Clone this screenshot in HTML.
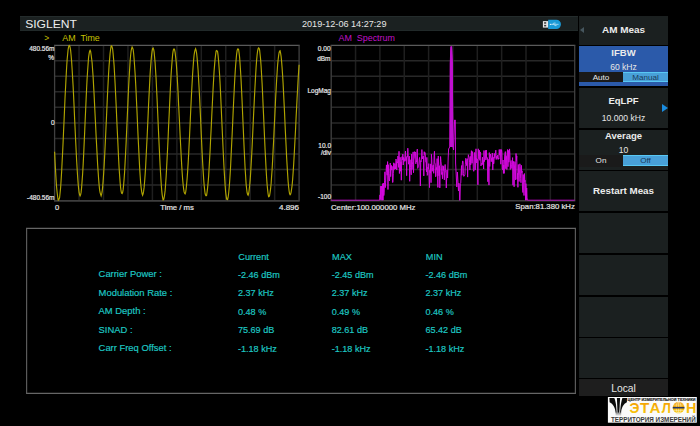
<!DOCTYPE html>
<html><head><meta charset="utf-8">
<style>
html,body{margin:0;padding:0;background:#000;width:700px;height:426px;overflow:hidden}
body{position:relative;font-family:"Liberation Sans",sans-serif}
.a{position:absolute;white-space:nowrap;line-height:1}
.topbar{position:absolute;left:19.5px;top:16px;width:558.5px;height:15px;background:#1b2121;box-shadow:inset 0 0.7px 0 #283030, inset 0 -0.7px 0 #252c2c}
.rp{position:absolute;left:579px;width:89px;background:#1b2020}
.w{color:#e6e6e6}
.lbl{color:#e6e6e6;font-size:6.5px;-webkit-text-stroke:0.2px #e6e6e6}
.cy{color:#22c8d4;font-size:9.4px}
.bt{color:#ececec;font-weight:bold;font-size:9.5px;text-align:center;width:89px}
.vt{color:#e6e6e6;font-size:8.6px;text-align:center;width:89px}
</style></head><body>
<div class="topbar"></div>
<svg width="100" height="40" style="position:absolute;left:0;top:0"><text x="25.2" y="28.1" font-family="Liberation Sans" font-size="10.8" fill="#ececec" stroke="none" textLength="51.8" lengthAdjust="spacingAndGlyphs">SIGLENT</text></svg>
<div class="a w" style="left:302px;top:20px;font-size:9.1px">2019-12-06 14:27:29</div>
<!-- usb icon -->
<svg width="24" height="14" style="position:absolute;left:540px;top:18px">
<rect x="2.9" y="3.1" width="5.4" height="6.5" fill="#e6e6e6"/>
<rect x="4.1" y="4.2" width="2.1" height="1.5" fill="#3a3a3a"/>
<rect x="4.1" y="6.9" width="2.1" height="1.5" fill="#3a3a3a"/>
<path d="M8.2,1.7 H16.3 A4.65,4.65 0 0 1 16.3,11 H8.2 Z" fill="#1a9ad8"/>
<g stroke="#e8f6ff" stroke-width="0.6" fill="none">
<line x1="10.4" y1="6.35" x2="18.6" y2="6.35"/>
<polyline points="12.6,6.35 13.6,5.1 15.6,5.1"/>
<polyline points="13.8,6.35 14.8,7.6 16.6,7.6"/>
</g>
<circle cx="10.4" cy="6.35" r="0.7" fill="#e8f6ff"/>
</svg>

<svg width="700" height="426" style="position:absolute;left:0;top:0">
<line x1="79.05" y1="45.20" x2="79.05" y2="200.60" stroke="#1f1f1f" stroke-width="1.5"/>
<line x1="54.60" y1="60.74" x2="299.10" y2="60.74" stroke="#282828" stroke-width="1.5"/>
<line x1="103.50" y1="45.20" x2="103.50" y2="200.60" stroke="#1f1f1f" stroke-width="1.5"/>
<line x1="54.60" y1="76.28" x2="299.10" y2="76.28" stroke="#282828" stroke-width="1.5"/>
<line x1="127.95" y1="45.20" x2="127.95" y2="200.60" stroke="#1f1f1f" stroke-width="1.5"/>
<line x1="54.60" y1="91.82" x2="299.10" y2="91.82" stroke="#282828" stroke-width="1.5"/>
<line x1="152.40" y1="45.20" x2="152.40" y2="200.60" stroke="#1f1f1f" stroke-width="1.5"/>
<line x1="54.60" y1="107.36" x2="299.10" y2="107.36" stroke="#282828" stroke-width="1.5"/>
<line x1="176.85" y1="45.20" x2="176.85" y2="200.60" stroke="#1f1f1f" stroke-width="1.5"/>
<line x1="54.60" y1="122.90" x2="299.10" y2="122.90" stroke="#282828" stroke-width="1.5"/>
<line x1="201.30" y1="45.20" x2="201.30" y2="200.60" stroke="#1f1f1f" stroke-width="1.5"/>
<line x1="54.60" y1="138.44" x2="299.10" y2="138.44" stroke="#282828" stroke-width="1.5"/>
<line x1="225.75" y1="45.20" x2="225.75" y2="200.60" stroke="#1f1f1f" stroke-width="1.5"/>
<line x1="54.60" y1="153.98" x2="299.10" y2="153.98" stroke="#282828" stroke-width="1.5"/>
<line x1="250.20" y1="45.20" x2="250.20" y2="200.60" stroke="#1f1f1f" stroke-width="1.5"/>
<line x1="54.60" y1="169.52" x2="299.10" y2="169.52" stroke="#282828" stroke-width="1.5"/>
<line x1="274.65" y1="45.20" x2="274.65" y2="200.60" stroke="#1f1f1f" stroke-width="1.5"/>
<line x1="54.60" y1="185.06" x2="299.10" y2="185.06" stroke="#282828" stroke-width="1.5"/>
<line x1="54.00" y1="45.45" x2="299.70" y2="45.45" stroke="#5a5a5a" stroke-width="1.3"/>
<line x1="54.00" y1="200.90" x2="299.70" y2="200.90" stroke="#3e3e3e" stroke-width="1.6"/>
<line x1="54.60" y1="45.45" x2="54.60" y2="200.90" stroke="#404040" stroke-width="1.3"/>
<line x1="299.10" y1="45.45" x2="299.10" y2="200.90" stroke="#404040" stroke-width="1.3"/>
<line x1="355.55" y1="45.20" x2="355.55" y2="200.60" stroke="#1f1f1f" stroke-width="1.5"/>
<line x1="331.20" y1="60.74" x2="574.70" y2="60.74" stroke="#282828" stroke-width="1.5"/>
<line x1="379.90" y1="45.20" x2="379.90" y2="200.60" stroke="#1f1f1f" stroke-width="1.5"/>
<line x1="331.20" y1="76.28" x2="574.70" y2="76.28" stroke="#282828" stroke-width="1.5"/>
<line x1="404.25" y1="45.20" x2="404.25" y2="200.60" stroke="#1f1f1f" stroke-width="1.5"/>
<line x1="331.20" y1="91.82" x2="574.70" y2="91.82" stroke="#282828" stroke-width="1.5"/>
<line x1="428.60" y1="45.20" x2="428.60" y2="200.60" stroke="#1f1f1f" stroke-width="1.5"/>
<line x1="331.20" y1="107.36" x2="574.70" y2="107.36" stroke="#282828" stroke-width="1.5"/>
<line x1="452.95" y1="45.20" x2="452.95" y2="200.60" stroke="#1f1f1f" stroke-width="1.5"/>
<line x1="331.20" y1="122.90" x2="574.70" y2="122.90" stroke="#282828" stroke-width="1.5"/>
<line x1="477.30" y1="45.20" x2="477.30" y2="200.60" stroke="#1f1f1f" stroke-width="1.5"/>
<line x1="331.20" y1="138.44" x2="574.70" y2="138.44" stroke="#282828" stroke-width="1.5"/>
<line x1="501.65" y1="45.20" x2="501.65" y2="200.60" stroke="#1f1f1f" stroke-width="1.5"/>
<line x1="331.20" y1="153.98" x2="574.70" y2="153.98" stroke="#282828" stroke-width="1.5"/>
<line x1="526.00" y1="45.20" x2="526.00" y2="200.60" stroke="#1f1f1f" stroke-width="1.5"/>
<line x1="331.20" y1="169.52" x2="574.70" y2="169.52" stroke="#282828" stroke-width="1.5"/>
<line x1="550.35" y1="45.20" x2="550.35" y2="200.60" stroke="#1f1f1f" stroke-width="1.5"/>
<line x1="331.20" y1="185.06" x2="574.70" y2="185.06" stroke="#282828" stroke-width="1.5"/>
<line x1="330.60" y1="45.45" x2="575.30" y2="45.45" stroke="#5a5a5a" stroke-width="1.3"/>
<line x1="330.60" y1="200.80" x2="575.30" y2="200.80" stroke="#3e3e3e" stroke-width="1.6"/>
<line x1="331.20" y1="45.45" x2="331.20" y2="200.80" stroke="#404040" stroke-width="1.3"/>
<line x1="574.70" y1="45.45" x2="574.70" y2="200.80" stroke="#404040" stroke-width="1.3"/>
<polyline fill="none" stroke="#b0a400" stroke-width="1.15" stroke-linejoin="miter" points="54.6,151.7 55.1,162.3 55.6,171.5 56.1,180.1 56.6,187.2 57.1,192.2 57.6,196.3 58.1,199.9 58.6,200.0 59.1,199.1 59.6,197.6 60.1,192.8 60.6,187.7 61.1,180.3 61.6,172.2 62.1,162.3 62.6,152.8 63.1,142.2 63.6,130.6 64.1,119.5 64.6,108.1 65.1,96.3 65.6,86.7 66.1,76.9 66.6,67.8 67.1,60.0 67.6,54.8 68.1,49.6 68.6,46.8 69.1,45.5 69.6,45.4 70.1,47.4 70.6,50.1 71.1,55.3 71.6,61.1 72.1,69.0 72.6,77.4 73.1,85.9 73.6,96.0 74.1,106.7 74.6,118.5 75.1,128.8 75.6,139.8 76.1,149.7 76.6,159.7 77.1,168.4 77.6,176.2 78.1,183.1 78.6,188.5 79.1,192.7 79.6,194.8 80.1,195.9 80.6,194.9 81.1,192.4 81.6,187.6 82.1,180.9 82.6,174.2 83.1,165.6 83.6,155.6 84.1,144.6 84.6,133.6 85.1,121.5 85.6,110.8 86.1,99.4 86.6,88.5 87.1,78.6 87.6,71.0 88.1,64.0 88.6,57.1 89.1,53.9 89.6,51.1 90.1,50.2 90.6,51.4 91.1,54.5 91.6,58.5 92.1,62.7 92.6,69.8 93.1,76.6 93.6,85.9 94.1,94.6 94.6,105.1 95.1,115.3 95.6,125.1 96.1,135.9 96.6,145.1 97.1,154.4 97.6,164.0 98.1,171.4 98.6,178.7 99.1,184.9 99.6,189.8 100.1,192.6 100.6,194.4 101.1,195.8 101.6,194.0 102.1,192.0 102.6,187.6 103.1,181.2 103.6,174.3 104.1,166.1 104.6,156.9 105.1,146.8 105.6,136.2 106.1,125.3 106.6,114.6 107.1,103.2 107.6,92.5 108.1,83.0 108.6,73.3 109.1,65.3 109.6,59.3 110.1,53.3 110.6,49.3 111.1,46.2 111.6,45.9 112.1,46.9 112.6,48.8 113.1,53.6 113.6,59.3 114.1,65.6 114.6,74.5 115.1,83.6 115.6,94.0 116.1,104.3 116.6,115.8 117.1,127.0 117.6,137.1 118.1,147.8 118.6,158.5 119.1,167.9 119.6,175.1 120.1,182.1 120.6,187.6 121.1,191.1 121.6,193.3 122.1,193.7 122.6,192.6 123.1,189.9 123.6,185.0 124.1,179.0 124.6,172.0 125.1,162.4 125.6,153.3 126.1,143.1 126.6,131.5 127.1,120.2 127.6,109.6 128.1,97.9 128.6,87.4 129.1,78.0 129.6,69.6 130.1,61.4 130.6,55.5 131.1,51.0 131.6,48.7 132.1,47.0 132.6,48.0 133.1,49.3 133.6,53.3 134.1,59.0 134.6,66.1 135.1,73.5 135.6,82.4 136.1,92.2 136.6,103.3 137.1,113.9 137.6,125.8 138.1,136.9 138.6,146.8 139.1,157.0 139.6,166.9 140.1,175.0 140.6,182.2 141.1,187.3 141.6,191.1 142.1,193.8 142.6,195.3 143.1,193.8 143.6,191.4 144.1,187.4 144.6,181.8 145.1,174.9 145.6,167.3 146.1,157.2 146.6,147.0 147.1,137.5 147.6,126.5 148.1,115.6 148.6,104.0 149.1,94.1 149.6,84.2 150.1,74.3 150.6,67.0 151.1,60.4 151.6,55.0 152.1,51.0 152.6,48.6 153.1,48.1 153.6,49.2 154.1,51.9 154.6,57.1 155.1,62.8 155.6,70.9 156.1,78.6 156.6,89.3 157.1,99.6 157.6,110.9 158.1,122.2 158.6,133.7 159.1,144.5 159.6,154.6 160.1,165.5 160.6,173.9 161.1,182.0 161.6,189.1 162.1,194.1 162.6,197.5 163.1,200.0 163.6,199.8 164.1,198.0 164.6,194.8 165.1,190.9 165.6,184.3 166.1,177.2 166.6,168.1 167.1,158.4 167.6,148.5 168.1,138.0 168.6,126.1 169.1,115.7 169.6,104.9 170.1,94.2 170.6,84.4 171.1,74.4 171.6,67.3 172.1,60.9 172.6,54.7 173.1,51.2 173.6,49.1 174.1,48.9 174.6,49.8 175.1,52.4 175.6,56.7 176.1,61.1 176.6,67.7 177.1,75.5 177.6,84.0 178.1,93.3 178.6,104.4 179.1,114.5 179.6,124.0 180.1,134.9 180.6,144.8 181.1,154.4 181.6,163.4 182.1,171.8 182.6,178.7 183.1,184.3 183.6,188.6 184.1,191.9 184.6,193.3 185.1,193.9 185.6,192.7 186.1,189.3 186.6,184.5 187.1,178.8 187.6,171.9 188.1,163.9 188.6,155.0 189.1,144.6 189.6,134.8 190.1,123.9 190.6,113.0 191.1,102.4 191.6,92.4 192.1,83.2 192.6,74.2 193.1,67.0 193.6,60.3 194.1,55.0 194.6,51.8 195.1,49.9 195.6,48.7 196.1,50.3 196.6,53.1 197.1,57.9 197.6,63.8 198.1,70.2 198.6,79.1 199.1,88.2 199.6,97.6 200.1,108.5 200.6,119.0 201.1,130.8 201.6,141.4 202.1,152.1 202.6,161.7 203.1,170.4 203.6,178.3 204.1,184.7 204.6,189.4 205.1,193.7 205.6,195.1 206.1,195.7 206.6,195.4 207.1,191.9 207.6,187.9 208.1,182.5 208.6,176.7 209.1,168.1 209.6,159.1 210.1,150.5 210.6,139.5 211.1,129.9 211.6,119.1 212.1,108.8 212.6,98.7 213.1,88.6 213.6,79.9 214.1,70.9 214.6,64.9 215.1,58.9 215.6,54.8 216.1,51.1 216.6,50.5 217.1,50.9 217.6,51.7 218.1,55.6 218.6,61.0 219.1,67.8 219.6,75.0 220.1,83.9 220.6,93.9 221.1,105.0 221.6,116.2 222.1,127.1 222.6,138.3 223.1,149.2 223.6,159.6 224.1,169.2 224.6,177.4 225.1,185.2 225.6,191.8 226.1,195.6 226.6,198.9 227.1,199.4 227.6,199.5 228.1,197.5 228.6,193.8 229.1,188.5 229.6,182.1 230.1,174.6 230.6,166.2 231.1,155.6 231.6,145.3 232.1,135.3 232.6,124.5 233.1,113.1 233.6,102.3 234.1,92.3 234.6,82.0 235.1,73.4 235.6,65.7 236.1,59.7 236.6,54.3 237.1,50.6 237.6,49.0 238.1,48.9 238.6,49.4 239.1,53.0 239.6,57.4 240.1,64.4 240.6,72.0 241.1,80.7 241.6,90.8 242.1,101.5 242.6,113.5 243.1,124.9 243.6,136.2 244.1,147.6 244.6,158.0 245.1,168.1 245.6,175.8 246.1,183.9 246.6,188.7 247.1,192.7 247.6,194.5 248.1,195.2 248.6,193.8 249.1,190.5 249.6,186.0 250.1,180.6 250.6,173.7 251.1,165.1 251.6,156.4 252.1,146.9 252.6,136.0 253.1,125.1 253.6,114.4 254.1,104.4 254.6,94.1 255.1,84.8 255.6,75.8 256.1,67.2 256.6,60.4 257.1,55.0 257.6,50.8 258.1,48.8 258.6,47.9 259.1,48.4 259.6,49.9 260.1,54.5 260.6,59.4 261.1,66.4 261.6,75.0 262.1,83.6 262.6,93.8 263.1,105.5 263.6,116.1 264.1,127.6 264.6,139.1 265.1,150.0 265.6,159.4 266.1,169.2 266.6,177.5 267.1,184.5 267.6,189.6 268.1,194.0 268.6,196.7 269.1,196.5 269.6,195.6 270.1,192.5 270.6,188.7 271.1,183.7 271.6,176.4 272.1,169.5 272.6,160.8 273.1,150.3 273.6,141.2 274.1,130.0 274.6,119.9 275.1,109.4 275.6,98.7 276.1,89.5 276.6,80.5 277.1,72.7 277.6,65.1 278.1,60.0 278.6,55.9 279.1,52.7 279.6,51.2 280.1,50.8 280.6,53.1 281.1,56.3 281.6,61.6 282.1,67.9 282.6,75.3 283.1,83.5 283.6,93.6 284.1,103.8 284.6,113.9 285.1,125.6 285.6,136.1 286.1,146.0 286.6,156.9 287.1,165.2 287.6,173.6 288.1,181.2 288.6,186.8 289.1,191.0 289.6,193.9 290.1,194.8 290.6,194.2 291.1,192.3 291.6,189.0 292.1,185.4 292.6,179.9 293.1,172.9 293.6,165.5 294.1,156.6 294.6,147.3 295.1,137.8 295.6,128.5 296.1,117.4 296.6,107.9 297.1,97.8 297.6,89.1 298.1,79.8 298.6,71.8 299.1,64.8"/>
<polyline fill="none" stroke="#d808e2" stroke-width="0.95" stroke-linejoin="bevel" points="331.20,200.2 331.58,200.2 331.96,200.2 332.34,200.2 332.72,200.2 333.11,200.2 333.49,200.2 333.87,200.2 334.25,200.2 334.63,200.2 335.01,200.2 335.39,200.2 335.77,200.2 336.15,200.2 336.53,200.2 336.92,200.2 337.30,200.2 337.68,200.2 338.06,200.2 338.44,200.2 338.82,200.2 339.20,200.2 339.58,200.2 339.96,200.2 340.35,200.2 340.73,200.2 341.11,200.2 341.49,200.2 341.87,200.2 342.25,200.2 342.63,200.2 343.01,200.2 343.39,200.2 343.78,200.2 344.16,200.2 344.54,200.2 344.92,200.2 345.30,200.2 345.68,200.2 346.06,200.2 346.44,200.2 346.82,200.2 347.20,200.2 347.59,200.2 347.97,200.2 348.35,200.2 348.73,200.2 349.11,200.2 349.49,200.2 349.87,200.2 350.25,200.2 350.63,200.2 351.02,200.2 351.40,200.2 351.78,200.2 352.16,200.2 352.54,200.2 352.92,200.2 353.30,200.2 353.68,200.2 354.06,200.2 354.44,200.2 354.83,200.2 355.21,200.2 355.59,200.2 355.97,200.2 356.35,200.2 356.73,200.2 357.11,200.2 357.49,200.2 357.87,200.2 358.26,200.2 358.64,200.2 359.02,200.2 359.40,200.2 359.78,200.2 360.16,200.2 360.54,200.2 360.92,200.2 361.30,200.2 361.69,200.2 362.07,200.2 362.45,200.2 362.83,200.2 363.21,200.2 363.59,200.2 363.97,200.2 364.35,200.2 364.73,200.2 365.11,200.2 365.50,200.2 365.88,200.2 366.26,200.2 366.64,200.2 367.02,200.2 367.40,200.2 367.78,200.2 368.16,200.2 368.54,200.2 368.93,200.2 369.31,200.2 369.69,200.2 370.07,200.2 370.45,200.2 370.83,200.2 371.21,200.2 371.59,200.2 371.97,200.2 372.35,200.2 372.74,200.2 373.12,200.2 373.50,200.2 373.88,200.2 374.26,200.2 374.64,200.2 375.02,200.2 375.40,200.2 375.78,200.2 376.17,200.2 376.55,200.2 376.93,200.2 377.31,200.2 377.69,200.2 378.07,200.2 378.45,200.2 378.83,200.2 379.21,200.2 379.60,200.2 379.98,194.9 380.36,199.4 380.74,186.1 381.12,200.2 381.50,186.1 381.88,188.5 382.26,200.2 382.64,183.7 383.02,200.2 383.41,183.2 383.79,195.6 384.17,192.8 384.55,180.3 384.93,171.8 385.31,187.6 385.69,182.4 386.07,172.6 386.45,164.9 386.84,172.3 387.22,175.2 387.60,161.6 387.98,189.5 388.36,164.7 388.74,175.5 389.12,180.0 389.50,180.9 389.88,173.3 390.26,163.0 390.65,176.6 391.03,166.7 391.41,165.4 391.79,170.1 392.17,166.4 392.55,182.4 392.93,182.4 393.31,173.5 393.69,162.8 394.08,167.1 394.46,169.4 394.84,163.6 395.22,165.8 395.60,169.0 395.98,159.0 396.36,160.6 396.74,169.9 397.12,162.4 397.51,163.0 397.89,156.1 398.27,158.9 398.65,167.4 399.03,151.3 399.41,173.5 399.79,163.7 400.17,157.3 400.55,171.2 400.93,161.9 401.32,180.2 401.70,158.5 402.08,156.6 402.46,159.9 402.84,154.0 403.22,165.0 403.60,157.4 403.98,159.1 404.36,159.2 404.75,161.4 405.13,154.1 405.51,151.0 405.89,160.7 406.27,157.2 406.65,175.7 407.03,156.3 407.41,157.1 407.79,148.2 408.17,153.6 408.56,164.2 408.94,161.6 409.32,156.2 409.70,181.3 410.08,159.7 410.46,167.6 410.84,170.2 411.22,174.8 411.60,154.1 411.99,169.5 412.37,164.8 412.75,161.2 413.13,151.9 413.51,172.7 413.89,160.0 414.27,158.1 414.65,151.6 415.03,153.1 415.42,152.1 415.80,163.9 416.18,160.7 416.56,161.9 416.94,151.6 417.32,149.1 417.70,168.4 418.08,167.3 418.46,165.3 418.84,165.2 419.23,159.3 419.61,157.4 419.99,164.3 420.37,186.0 420.75,160.7 421.13,161.8 421.51,158.0 421.89,149.6 422.27,155.8 422.66,159.0 423.04,157.2 423.42,156.2 423.80,175.9 424.18,151.7 424.56,154.5 424.94,152.5 425.32,154.2 425.70,161.9 426.08,161.8 426.47,171.8 426.85,157.4 427.23,175.4 427.61,174.9 427.99,167.1 428.37,169.0 428.75,163.6 429.13,177.1 429.51,187.6 429.90,170.2 430.28,173.1 430.66,163.9 431.04,182.7 431.42,154.3 431.80,159.5 432.18,171.3 432.56,167.6 432.94,165.3 433.33,165.0 433.71,173.3 434.09,156.1 434.47,151.3 434.85,163.6 435.23,163.5 435.61,176.8 435.99,175.9 436.37,167.4 436.75,169.7 437.14,158.6 437.52,173.9 437.90,187.4 438.28,156.0 438.66,165.4 439.04,175.8 439.42,165.7 439.80,187.9 440.18,166.7 440.57,156.5 440.95,161.3 441.33,165.1 441.71,174.5 442.09,172.3 442.47,178.8 442.85,165.6 443.23,170.4 443.61,166.4 443.99,175.6 444.38,179.9 444.76,168.9 445.14,164.5 445.52,170.7 445.90,173.0 446.30,188.0 447.00,170.0 447.60,178.0 448.20,158.0 448.60,149.0 449.70,147.0 450.30,63.0 450.80,46.5 451.60,46.5 452.20,63.0 453.00,147.0 453.60,150.0 454.60,120.0 455.30,120.0 455.60,163.0 456.20,175.0 456.80,187.0 457.40,172.0 458.00,182.0 458.48,191.0 458.86,183.1 459.24,185.2 459.62,200.2 460.00,200.2 460.38,183.7 460.76,183.2 461.14,173.1 461.52,165.6 461.91,175.3 462.29,164.3 462.67,160.9 463.05,161.8 463.43,173.4 463.81,176.4 464.19,175.3 464.57,175.5 464.95,174.3 465.33,164.3 465.72,158.3 466.10,159.3 466.48,165.5 466.86,161.9 467.24,158.7 467.62,177.1 468.00,160.3 468.38,154.7 468.76,157.1 469.15,157.4 469.53,162.3 469.91,169.9 470.29,156.4 470.67,165.0 471.05,155.9 471.43,150.7 471.81,163.3 472.19,163.1 472.57,151.6 472.96,156.9 473.34,169.4 473.72,171.3 474.10,170.0 474.48,152.5 474.86,154.8 475.24,169.9 475.62,154.1 476.00,148.8 476.39,157.1 476.77,163.0 477.15,158.9 477.53,170.1 477.91,184.8 478.29,148.8 478.67,156.7 479.05,158.8 479.43,150.3 479.82,160.3 480.20,151.9 480.58,152.9 480.96,165.9 481.34,164.5 481.72,163.3 482.10,164.8 482.48,157.2 482.86,164.2 483.24,160.3 483.63,169.0 484.01,150.5 484.39,161.6 484.77,159.3 485.15,157.0 485.53,150.5 485.91,160.0 486.29,150.0 486.67,158.3 487.06,157.7 487.44,157.8 487.82,181.7 488.20,159.3 488.58,166.2 488.96,185.1 489.34,152.6 489.72,166.5 490.10,158.5 490.48,154.0 490.87,157.0 491.25,161.7 491.63,157.8 492.01,157.1 492.39,153.0 492.77,170.0 493.15,157.1 493.53,164.0 493.91,163.2 494.30,153.4 494.68,158.2 495.06,157.2 495.44,153.7 495.82,150.2 496.20,159.5 496.58,156.4 496.96,158.4 497.34,158.3 497.73,155.1 498.11,159.5 498.49,158.0 498.87,159.0 499.25,149.5 499.63,155.1 500.01,151.5 500.39,149.5 500.77,164.2 501.15,157.7 501.54,149.6 501.92,152.5 502.30,168.9 502.68,169.8 503.06,160.0 503.44,173.4 503.82,165.0 504.20,173.4 504.58,156.1 504.97,154.1 505.35,151.6 505.73,168.7 506.11,155.6 506.49,156.7 506.87,169.5 507.25,152.4 507.63,149.5 508.01,166.7 508.39,150.4 508.78,162.2 509.16,160.5 509.54,148.9 509.92,154.3 510.30,169.5 510.68,162.0 511.06,160.5 511.44,164.2 511.82,168.5 512.21,165.0 512.59,157.6 512.97,185.2 513.35,161.3 513.73,163.9 514.11,186.8 514.49,167.0 514.87,161.6 515.25,164.0 515.64,179.9 516.02,153.5 516.40,160.5 516.78,155.9 517.16,179.3 517.54,173.3 517.92,187.3 518.30,164.5 518.68,175.5 519.06,181.5 519.45,173.0 519.83,163.8 520.21,166.5 520.59,178.3 520.97,182.7 521.35,165.3 521.73,172.8 522.11,170.9 522.49,188.0 522.88,192.5 523.26,174.6 523.64,181.0 524.02,195.5 524.40,173.5 524.78,181.7 525.16,180.4 525.54,200.2 525.92,183.7 526.30,200.2 526.69,188.0 527.07,197.9 527.45,200.2 527.83,200.2 528.21,200.2 528.59,200.2 528.97,200.2 529.35,200.2 529.73,200.2 530.12,200.2 530.50,200.2 530.88,200.2 531.26,200.2 531.64,200.2 532.02,200.2 532.40,200.2 532.78,200.2 533.16,200.2 533.55,200.2 533.93,200.2 534.31,200.2 534.69,200.2 535.07,200.2 535.45,200.2 535.83,200.2 536.21,200.2 536.59,200.2 536.97,200.2 537.36,200.2 537.74,200.2 538.12,200.2 538.50,200.2 538.88,200.2 539.26,200.2 539.64,200.2 540.02,200.2 540.40,200.2 540.79,200.2 541.17,200.2 541.55,200.2 541.93,200.2 542.31,200.2 542.69,200.2 543.07,200.2 543.45,200.2 543.83,200.2 544.21,200.2 544.60,200.2 544.98,200.2 545.36,200.2 545.74,200.2 546.12,200.2 546.50,200.2 546.88,200.2 547.26,200.2 547.64,200.2 548.03,200.2 548.41,200.2 548.79,200.2 549.17,200.2 549.55,200.2 549.93,200.2 550.31,200.2 550.69,200.2 551.07,200.2 551.46,200.2 551.84,200.2 552.22,200.2 552.60,200.2 552.98,200.2 553.36,200.2 553.74,200.2 554.12,200.2 554.50,200.2 554.88,200.2 555.27,200.2 555.65,200.2 556.03,200.2 556.41,200.2 556.79,200.2 557.17,200.2 557.55,200.2 557.93,200.2 558.31,200.2 558.70,200.2 559.08,200.2 559.46,200.2 559.84,200.2 560.22,200.2 560.60,200.2 560.98,200.2 561.36,200.2 561.74,200.2 562.12,200.2 562.51,200.2 562.89,200.2 563.27,200.2 563.65,200.2 564.03,200.2 564.41,200.2 564.79,200.2 565.17,200.2 565.55,200.2 565.94,200.2 566.32,200.2 566.70,200.2 567.08,200.2 567.46,200.2 567.84,200.2 568.22,200.2 568.60,200.2 568.98,200.2 569.37,200.2 569.75,200.2 570.13,200.2 570.51,200.2 570.89,200.2 571.27,200.2 571.65,200.2 572.03,200.2 572.41,200.2 572.79,200.2 573.18,200.2 573.56,200.2 573.94,200.2 574.32,200.2 574.70,200.2"/><path d="M449.9,147 L449.9,63 L450.3,52 L450.9,47 L452.0,47 L452.3,52 L452.8,63 L453.3,147 Z" fill="#c010d0"/>
<line x1="26" y1="228.4" x2="576" y2="228.4" stroke="#666" stroke-width="1.2"/>
<line x1="26" y1="393.4" x2="576" y2="393.4" stroke="#666" stroke-width="1.2"/>
<line x1="26.6" y1="228.4" x2="26.6" y2="393.4" stroke="#5a5a5a" stroke-width="1.2"/>
<line x1="575.4" y1="228.4" x2="575.4" y2="393.4" stroke="#5a5a5a" stroke-width="1.2"/>
</svg>

<div class="a" style="left:44.2px;top:34.3px;font-size:8.5px;color:#c8c000">&gt;</div>
<div class="a" style="left:62.3px;top:34.2px;font-size:8.9px;color:#c8c000">AM&nbsp; Time</div>
<div class="a" style="left:338.6px;top:34.2px;font-size:8.9px;color:#c010c8">AM&nbsp; Spectrum</div>

<div class="a lbl" style="right:645.5px;top:46px">480.56m</div>
<div class="a lbl" style="right:646px;top:55px">%</div>
<div class="a lbl" style="right:645.5px;top:120px">0</div>
<div class="a lbl" style="right:645.5px;top:194.5px">-480.56m</div>
<div class="a lbl" style="left:55px;top:204px;font-size:7.5px">0</div>
<div class="a lbl" style="left:160.3px;top:203.5px;font-size:7.7px">Time / ms</div>
<div class="a lbl" style="right:401px;top:203.5px;font-size:8px">4.896</div>

<div class="a lbl" style="right:369.5px;top:45.5px">0.00</div>
<div class="a lbl" style="right:369.5px;top:55.5px">dBm</div>
<div class="a lbl" style="right:369px;top:87.5px">LogMag</div>
<div class="a lbl" style="right:369px;top:142.5px">10.0</div>
<div class="a lbl" style="right:369px;top:150px">/div</div>
<div class="a lbl" style="right:369px;top:194px">-100</div>
<div class="a lbl" style="left:331px;top:203.5px;font-size:7.75px">Center:100.000000 MHz</div>
<div class="a lbl" style="right:125.2px;top:203.2px;font-size:7.75px">Span:81.380 kHz</div>

<!-- measurement table -->
<svg width="700" height="426" style="position:absolute;left:0;top:0"><g font-family="Liberation Sans" fill="#1ec8c4" stroke="#1ec8c4" stroke-width="0.18">
<text transform="translate(238.30,260.30) scale(0.925,1)" font-size="9.9">Current</text>
<text transform="translate(332.05,260.30) scale(0.925,1)" font-size="9.9">MAX</text>
<text transform="translate(425.80,260.30) scale(0.925,1)" font-size="9.9">MIN</text>
<text transform="translate(98.60,277.10) scale(0.96,1)" font-size="9.8">Carrier Power :</text>
<text transform="translate(237.90,278.00) scale(0.93,1)" font-size="9.8">-2.46 dBm</text>
<text transform="translate(331.65,278.00) scale(0.93,1)" font-size="9.8">-2.45 dBm</text>
<text transform="translate(425.40,278.00) scale(0.93,1)" font-size="9.8">-2.46 dBm</text>
<text transform="translate(98.60,295.65) scale(0.96,1)" font-size="9.8">Modulation Rate :</text>
<text transform="translate(237.90,296.40) scale(0.93,1)" font-size="9.8">2.37 kHz</text>
<text transform="translate(331.65,296.40) scale(0.93,1)" font-size="9.8">2.37 kHz</text>
<text transform="translate(425.40,296.40) scale(0.93,1)" font-size="9.8">2.37 kHz</text>
<text transform="translate(98.60,314.20) scale(0.96,1)" font-size="9.8">AM Depth :</text>
<text transform="translate(237.90,314.80) scale(0.93,1)" font-size="9.8">0.48 %</text>
<text transform="translate(331.65,314.80) scale(0.93,1)" font-size="9.8">0.49 %</text>
<text transform="translate(425.40,314.80) scale(0.93,1)" font-size="9.8">0.46 %</text>
<text transform="translate(98.60,332.75) scale(0.96,1)" font-size="9.8">SINAD :</text>
<text transform="translate(237.90,333.20) scale(0.93,1)" font-size="9.8">75.69 dB</text>
<text transform="translate(331.65,333.20) scale(0.93,1)" font-size="9.8">82.61 dB</text>
<text transform="translate(425.40,333.20) scale(0.93,1)" font-size="9.8">65.42 dB</text>
<text transform="translate(98.60,351.30) scale(0.96,1)" font-size="9.8">Carr Freq Offset :</text>
<text transform="translate(237.90,351.60) scale(0.93,1)" font-size="9.8">-1.18 kHz</text>
<text transform="translate(331.65,351.60) scale(0.93,1)" font-size="9.8">-1.18 kHz</text>
<text transform="translate(425.40,351.60) scale(0.93,1)" font-size="9.8">-1.18 kHz</text>
</g></svg>
<div class="rp" style="top:16.00px;height:28.50px;background:#1b2020"></div>
<div class="rp" style="top:46.20px;height:39.94px;background:#2b5aaa"></div>
<div class="rp" style="top:87.94px;height:39.94px;background:#1b2020"></div>
<div class="rp" style="top:129.68px;height:39.94px;background:#1b2020"></div>
<div class="rp" style="top:171.42px;height:39.94px;background:#1b2020"></div>
<div class="rp" style="top:213.16px;height:39.94px;background:#1b2020"></div>
<div class="rp" style="top:254.90px;height:39.94px;background:#1b2020"></div>
<div class="rp" style="top:296.64px;height:39.94px;background:#1b2020"></div>
<div class="rp" style="top:338.38px;height:39.94px;background:#1b2020"></div>
<div class="rp" style="top:379.42px;height:16.58px;background:#1e1e1e"></div>

<div class="a bt" style="left:579px;top:25.2px;font-size:9.95px">AM Meas</div>
<div style="position:absolute;left:580px;top:27px;width:0;height:0;border-top:3.5px solid transparent;border-bottom:3.5px solid transparent;border-right:4.5px solid #46565e"></div>
<div class="a bt" style="left:579px;top:47.6px">IFBW</div>
<div class="a vt" style="left:579px;top:62.6px">60 kHz</div>
<div style="position:absolute;left:579px;top:71.8px;width:44px;height:10.6px;background:#1a1a1a"></div>
<div style="position:absolute;left:623px;top:71.6px;width:45px;height:10.8px;background:#48a0d8;border-bottom:0.7px solid #58c8f4;border-top:0.7px solid #58c8f4;box-sizing:border-box"></div>
<div class="a" style="left:579px;width:44px;text-align:center;top:73.6px;font-size:8.1px;color:#e8e8e8">Auto</div>
<div class="a" style="left:623px;width:45px;text-align:center;top:73.6px;font-size:8.1px;color:#1a3a58">Manual</div>

<div class="a bt" style="left:579px;top:95.8px">EqLPF</div>
<div class="a vt" style="left:579px;top:113.5px">10.000 kHz</div>
<div style="position:absolute;left:661.5px;top:103.6px;width:0;height:0;border-top:4.2px solid transparent;border-bottom:4.2px solid transparent;border-left:6.5px solid #1a8ce0"></div>

<div class="a bt" style="left:579px;top:131.4px">Average</div>
<div class="a vt" style="left:579px;top:145.7px">10</div>
<div style="position:absolute;left:579px;top:155.2px;width:44px;height:11.4px;background:#1a1a1a"></div>
<div style="position:absolute;left:623px;top:155.0px;width:45px;height:11.2px;background:#48a0d8;border-bottom:0.7px solid #58c8f4;border-top:0.7px solid #58c8f4;box-sizing:border-box"></div>
<div class="a" style="left:579px;width:44px;text-align:center;top:157.2px;font-size:8.1px;color:#e8e8e8">On</div>
<div class="a" style="left:623px;width:45px;text-align:center;top:157.2px;font-size:8.1px;color:#1a3a58">Off</div>

<div class="a bt" style="left:579px;top:186px;font-size:9.8px">Restart Meas</div>
<div class="a vt" style="left:579px;top:383.6px;font-size:10.3px">Local</div>

<!-- logo -->
<svg width="700" height="426" style="position:absolute;left:0;top:0">
<defs>
<linearGradient id="og" x1="0" y1="0" x2="0" y2="1"><stop offset="0" stop-color="#f39a00"/><stop offset="1" stop-color="#f7cc10"/></linearGradient>
<linearGradient id="rf" x1="0" y1="0" x2="0" y2="1"><stop offset="0" stop-color="#555"/><stop offset="1" stop-color="#fafafa"/></linearGradient>
</defs>
<rect x="607.9" y="397" width="88.9" height="25.7" fill="#fafafa"/>
<path d="M609.4,398.0 L614.3,398.0 C615.5,400.9 616.3,404 616.7,412.7 L615.6,412.7 C615.4,408 613,403.6 609.6,402.2 Z" fill="#0c0c0c"/>
<path d="M627.0,398.0 L622.4,398.0 C621.5,400.9 620.7,404 620.1,412.7 L621.1,412.7 C621.3,408 623.6,403.6 626.9,402.2 Z" fill="#0c0c0c"/>
<path d="M616.9,398.0 L620.1,398.0 L619.3,412.7 L617.5,412.7 Z" fill="#0c0c0c"/>
<rect x="615.6" y="412.7" width="5.6" height="3.4" fill="url(#rf)" opacity="0.7"/>
<text x="627.6" y="400.9" font-family="Liberation Sans" font-weight="bold" font-size="4.0" fill="#1a1a1a" stroke="#1a1a1a" stroke-width="0.15" textLength="68" lengthAdjust="spacingAndGlyphs">ЦЕНТР ИЗМЕРИТЕЛЬНОЙ ТЕХНИКИ</text>
<g font-family="Liberation Sans" font-weight="bold" font-size="14.6" fill="url(#og)">
<text x="629.6" y="412.9" textLength="10" lengthAdjust="spacingAndGlyphs">Э</text>
<text x="640" y="412.9" textLength="9.3" lengthAdjust="spacingAndGlyphs">Т</text>
<text x="649.6" y="412.9" textLength="11" lengthAdjust="spacingAndGlyphs">А</text>
<text x="661.8" y="412.9" textLength="9.2" lengthAdjust="spacingAndGlyphs">Л</text>
<text x="685.9" y="412.9" textLength="10.4" lengthAdjust="spacingAndGlyphs">Н</text>
</g>
<circle cx="678.6" cy="407.7" r="5.9" fill="url(#og)"/>
<g stroke="#fff" stroke-width="0.45" fill="none" opacity="0.9">
<ellipse cx="678.6" cy="407.7" rx="2.4" ry="5.9"/>
<line x1="678.6" y1="401.8" x2="678.6" y2="413.6"/>
<line x1="672.9" y1="405" x2="684.3" y2="405"/>
<line x1="672.9" y1="410.4" x2="684.3" y2="410.4"/>
</g>
<line x1="672.9" y1="402.9" x2="684.3" y2="402.9" stroke="#fff" stroke-width="0.35"/><line x1="672.9" y1="412.4" x2="684.3" y2="412.4" stroke="#fff" stroke-width="0.35"/><rect x="672.8" y="406.9" width="11.6" height="1.6" fill="#2a3560"/>
<text x="610.9" y="421.8" font-family="Liberation Sans" font-weight="bold" font-size="6.6" fill="#3a3a3a" textLength="84.8" lengthAdjust="spacingAndGlyphs">ТЕРРИТОРИЯ ИЗМЕРЕНИЙ</text>
</svg>
</body></html>
